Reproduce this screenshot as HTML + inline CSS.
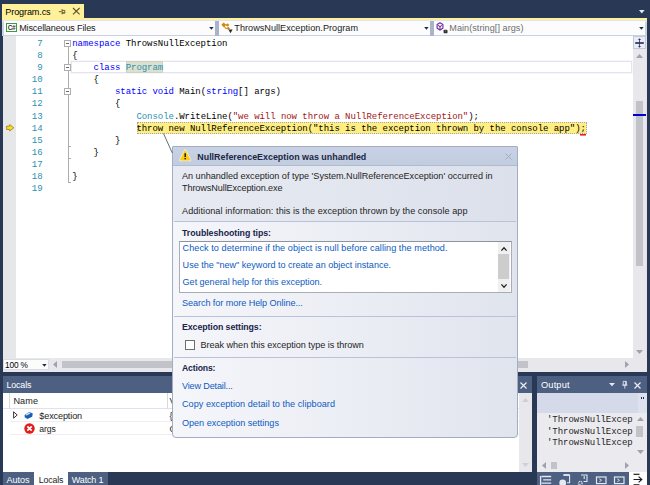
<!DOCTYPE html>
<html><head><meta charset="utf-8"><title>Program.cs</title>
<style>
*{box-sizing:border-box;margin:0;padding:0}
html,body{width:650px;height:485px;overflow:hidden;background:#293955}
.abs{position:absolute}
#root{position:relative;width:650px;height:485px;overflow:hidden;background:#293955;font-family:"Liberation Sans",sans-serif;font-size:9.1px;color:#1e1e1e}
.ui{font-family:"Liberation Sans",sans-serif;font-size:9.1px;white-space:nowrap;line-height:11px;height:11px}
.mono{font-family:"Liberation Mono",monospace;font-size:9px;white-space:pre;letter-spacing:-0.05px}
.b{font-weight:bold}
.ln{left:13px;width:29.5px;text-align:right;color:#2b91af;height:12.13px;line-height:12.13px}
.cl{left:72.2px;height:12.13px;line-height:12.13px;color:#000}
.k{color:#0000ff}.t{color:#2b91af}.s{color:#a31515}
.ref{background:#dde3d5;box-shadow:0 0 0 0.5px #cfd6c8}
.cur{background:#ffee62;outline:1px dotted #9a8f3a;outline-offset:-0.5px}
.obox{width:7px;height:7px;border:1px solid #adadad;background:#fff}
.lnk{color:#0e5bc0}
.sep{height:1px;background:#b9c2d6;left:174px;width:342px}
svg{position:absolute;overflow:visible}
</style></head><body><div id="root">

<!-- document tab strip -->
<div class="abs" style="left:2px;top:4px;width:82px;height:15px;background:#fff09a"></div>
<div class="abs ui " style="left:5.3px;top:6.50px;font-size:9.1px;letter-spacing:-0.130px;color:#000">Program.cs</div>
<svg style="left:58px;top:8px" width="24" height="9" viewBox="0 0 24 9">
  <path d="M0.9 3.7H3.6 M4.1 1.1V6.3 M4.1 2.4H6.8V5.1H4.1 M4.1 4.8H6.8" fill="none" stroke="#5e5333" stroke-width="0.9"/>
  <path d="M15 0L21.6 6.3M21.6 0L15 6.3" fill="none" stroke="#5e5333" stroke-width="1.15"/>
</svg>
<svg style="left:638.6px;top:10.3px" width="6" height="4" viewBox="0 0 6 4"><path d="M0 0H5.6L2.8 3.4Z" fill="#e4e9f2"/></svg>
<div class="abs" style="left:2px;top:17.8px;width:645px;height:2.2px;background:#fff09a"></div>

<!-- navigation bar -->
<div class="abs" style="left:2px;top:20px;width:645px;height:16px;background:linear-gradient(180deg,#e2e6f0 0,#dfe3ee 1.5px,#cdd4e4 3px,#c9d1e2 100%)"></div>
<div class="abs" style="left:3.5px;top:21.2px;width:211.5px;height:13.5px;background:#fcfcfd"></div>
<div class="abs" style="left:218.5px;top:21.2px;width:211.5px;height:13.5px;background:#fcfcfd"></div>
<div class="abs" style="left:433.5px;top:21.2px;width:211.8px;height:13.5px;background:#fcfcfd"></div>
<div class="abs" style="left:215px;top:21px;width:3.5px;height:14.5px;background:#a9b4cb"></div>
<div class="abs" style="left:430px;top:21px;width:3.5px;height:14.5px;background:#a9b4cb"></div>
<!-- C# icon -->
<div class="abs" style="left:6px;top:23px;width:11px;height:9px;border:1px solid #3f9a45;background:#fff"></div>
<div class="abs" style="left:7px;top:24px;width:9px;height:7px;line-height:7px;font-size:6.5px;font-weight:bold;color:#333;text-align:center;letter-spacing:-0.3px;font-family:'Liberation Sans',sans-serif">C#</div>
<div class="abs ui " style="left:19.2px;top:22.50px;font-size:9.08px;letter-spacing:-0.152px;color:#1b1b1b">Miscellaneous Files</div>
<svg style="left:209px;top:26.8px" width="5" height="3" viewBox="0 0 5 3"><path d="M0.2 0H4.6L2.4 2.7Z" fill="#1b2a47"/></svg>
<!-- class icon -->
<svg style="left:220.5px;top:21.5px" width="12" height="12" viewBox="0 0 12 12">
  <path d="M0.4 2.85L2.7 0.55L5 2.85L2.7 5.15Z M4.9 3L6.6 1.3L8.3 3L6.6 4.7Z M5.6 6.4L7.3 4.7L9 6.4L7.3 8.1Z" fill="#d2860f"/>
  <path d="M2.7 3L6.6 3 M3.2 4.2L4.6 6.3L7.3 6.4" fill="none" stroke="#d2860f" stroke-width="1.1"/>
  <path d="M7.4 7.6H11.6L9.5 11.2Z" fill="#2b2b2b"/>
</svg>
<div class="abs ui " style="left:234.3px;top:22.50px;font-size:9.1px;letter-spacing:0.033px;color:#1b1b1b">ThrowsNullException.Program</div>
<svg style="left:424px;top:26.8px" width="5" height="3" viewBox="0 0 5 3"><path d="M0.2 0H4.6L2.4 2.7Z" fill="#1b2a47"/></svg>
<!-- method icon -->
<svg style="left:435.5px;top:21.5px" width="12" height="12" viewBox="0 0 12 12">
  <path d="M4 0.8L6.9 2.5V6.3L4 8.1L1.1 6.3V2.5Z" fill="#fff" stroke="#6c2aa0" stroke-width="1.15" stroke-linejoin="round"/>
  <path d="M2.1 3.4L4 4.7L5.9 3.4 M4 4.7V7.8" fill="none" stroke="#6c2aa0" stroke-width="1.1"/>
  <rect x="7.6" y="7.7" width="3.9" height="3.6" rx="0.9" fill="#333"/><path d="M9 9.3L10.2 8.6" stroke="#999" stroke-width="0.6"/>
</svg>
<div class="abs ui " style="left:449.3px;top:22.50px;font-size:9.1px;letter-spacing:0.048px;color:#6d6d6d">Main(string[] args)</div>
<svg style="left:638.5px;top:26.8px" width="5" height="3" viewBox="0 0 5 3"><path d="M0.2 0H4.6L2.4 2.7Z" fill="#1b2a47"/></svg>

<!-- editor -->
<div class="abs" style="left:2.6px;top:36px;width:644.4px;height:335.6px;background:#fff"></div>
<div class="abs" style="left:2.8px;top:36px;width:13.1px;height:322px;background:#e6e7e8"></div>
<!-- current line box (line 9) -->
<div class="abs" style="left:71px;top:61.4px;width:560.5px;height:11.6px;border:1px solid #e4e4f0;box-shadow:0 0 0 0.5px #efeff6"></div>
<div class="abs" style="left:125.9px;top:60.8px;width:37.5px;height:12.3px;background:#dce1cf;border:1px solid #cdd3c0"></div>
<div class="abs" style="left:136.5px;top:122.3px;width:450px;height:12.2px;background:#ffee80;border:1px dotted #a3a3c6"></div>
<div class="abs" style="left:67.7px;top:47.31px;width:1px;height:135.00px;background:#adadad"></div>
<div class="abs obox" style="left:64.1px;top:39.61px"></div><div class="abs" style="left:65.9px;top:42.61px;width:3.4px;height:1px;background:#6a6a6a"></div>
<div class="abs obox" style="left:64.1px;top:63.88px"></div><div class="abs" style="left:65.9px;top:66.88px;width:3.4px;height:1px;background:#6a6a6a"></div>
<div class="abs obox" style="left:64.1px;top:88.14px"></div><div class="abs" style="left:65.9px;top:91.14px;width:3.4px;height:1px;background:#6a6a6a"></div>
<div class="abs" style="left:67.7px;top:145.92px;width:3px;height:1px;background:#adadad"></div>
<div class="abs" style="left:67.7px;top:158.05px;width:3px;height:1px;background:#adadad"></div>
<div class="abs" style="left:67.7px;top:182.31px;width:3px;height:1px;background:#adadad"></div>
<div class="abs mono ln" style="top:37.75px">7</div>
<div class="abs mono cl" style="top:37.75px"><span class="k">namespace</span> ThrowsNullException</div>
<div class="abs mono ln" style="top:49.88px">8</div>
<div class="abs mono cl" style="top:49.88px">{</div>
<div class="abs mono ln" style="top:62.01px">9</div>
<div class="abs mono cl" style="top:62.01px">    <span class="k">class</span> <span class="t">Program</span></div>
<div class="abs mono ln" style="top:74.14px">10</div>
<div class="abs mono cl" style="top:74.14px">    {</div>
<div class="abs mono ln" style="top:86.27px">11</div>
<div class="abs mono cl" style="top:86.27px">        <span class="k">static</span> <span class="k">void</span> Main(<span class="k">string</span>[] args)</div>
<div class="abs mono ln" style="top:98.40px">12</div>
<div class="abs mono cl" style="top:98.40px">        {</div>
<div class="abs mono ln" style="top:110.53px">13</div>
<div class="abs mono cl" style="top:110.53px">            <span class="t">Console</span>.WriteLine(<span class="s">"we will now throw a NullReferenceException"</span>);</div>
<div class="abs mono ln" style="top:122.66px">14</div>
<div class="abs mono cl" style="top:122.66px">            throw new NullReferenceException("this is the exception thrown by the console app");</div>
<div class="abs mono ln" style="top:134.79px">15</div>
<div class="abs mono cl" style="top:134.79px">        }</div>
<div class="abs mono ln" style="top:146.92px">16</div>
<div class="abs mono cl" style="top:146.92px">    }</div>
<div class="abs mono ln" style="top:159.05px">17</div>
<div class="abs mono ln" style="top:171.18px">18</div>
<div class="abs mono cl" style="top:171.18px">}</div>
<div class="abs mono ln" style="top:183.31px">19</div>
<!-- red squiggle -->
<svg style="left:580px;top:133.6px" width="6" height="2" viewBox="0 0 6 2"><rect x="0" y="0" width="6" height="1.6" fill="#e8202a"/></svg>
<!-- instruction pointer arrow -->
<svg style="left:5.6px;top:123.8px" width="9" height="8" viewBox="0 0 9 8"><path d="M0.6 2.1H3.7V0.6L7.8 3.8L3.7 7V5.5H0.6Z" fill="#ffd826" stroke="#9a7f22" stroke-width="0.8" stroke-linejoin="round"/></svg>

<!-- editor vertical scrollbar -->
<div class="abs" style="left:633.3px;top:36px;width:12.6px;height:322px;background:#e8e8ec"></div><div class="abs" style="left:645.9px;top:36px;width:1.1px;height:335px;background:#dfe3ee"></div>
<div class="abs" style="left:633.3px;top:36px;width:12.6px;height:12.8px;background:#e9ecf6;border:1px solid #c3c9dd"></div>
<svg style="left:635.1px;top:38.2px" width="9" height="10" viewBox="0 0 9 10"><path d="M0.2 5H8.8" stroke="#2a3654" stroke-width="1.7"/><path d="M4.5 0.2L6 2.1H4.9V7.9H6L4.5 9.8L3 7.9H4.1V2.1H3Z" fill="#2a3654"/></svg>
<svg style="left:636px;top:54px" width="7" height="4" viewBox="0 0 7 4"><path d="M3.5 0L7 4H0Z" fill="#a0a3ad"/></svg>
<div class="abs" style="left:635.7px;top:101px;width:7.3px;height:165px;background:#c2c3c9"></div>
<div class="abs" style="left:633.3px;top:114.3px;width:12.6px;height:1.4px;background:#0000cd"></div>
<svg style="left:636px;top:350px" width="7" height="4" viewBox="0 0 7 4"><path d="M0 0H7L3.5 4Z" fill="#a0a3ad"/></svg>

<!-- horizontal scrollbar row -->
<div class="abs" style="left:2.6px;top:358px;width:644.4px;height:13.6px;background:#e8e8ec"></div>
<div class="abs" style="left:3px;top:358.8px;width:45.5px;height:11.7px;background:#fcfcfd;border:1px solid #d9dce6"></div>
<div class="abs ui " style="left:5.0px;top:359.50px;font-size:8.31px;letter-spacing:-0.151px;color:#000">100 %</div>
<svg style="left:41.5px;top:363.8px" width="5" height="3" viewBox="0 0 5 3"><path d="M0.2 0H4.6L2.4 2.7Z" fill="#1b2a47"/></svg>
<svg style="left:53px;top:361px" width="4" height="7" viewBox="0 0 4 7"><path d="M4 0V7L0 3.5Z" fill="#a0a3ad"/></svg>
<div class="abs" style="left:61.5px;top:361px;width:466px;height:6.8px;background:#c2c3c9"></div>
<svg style="left:625px;top:361.4px" width="4" height="7" viewBox="0 0 4 7"><path d="M0 0V7L4 3.5Z" fill="#a0a3ad"/></svg>

<!-- Locals panel -->
<div class="abs" style="left:2.5px;top:376.4px;width:529.2px;height:16.6px;background:#4d6082"></div>
<div class="abs ui " style="left:6.5px;top:379.50px;font-size:8.89px;letter-spacing:-0.148px;color:#fff">Locals</div>
<svg style="left:519.5px;top:381.5px" width="7" height="7" viewBox="0 0 7 7"><path d="M0.5 0.5L6.5 6.5M6.5 0.5L0.5 6.5" stroke="#f0f3f8" stroke-width="1.1" fill="none"/></svg>
<div class="abs" style="left:2.5px;top:393px;width:529.5px;height:79px;background:#fff"></div>
<div class="abs" style="left:3px;top:393px;width:516px;height:16px;background:#fff;border-bottom:1px solid #dfe2ea"></div>
<div class="abs" style="left:8.8px;top:393px;width:1px;height:15.5px;background:#d6d9e0"></div>
<div class="abs" style="left:167px;top:393px;width:1px;height:15.5px;background:#d6d9e0"></div>
<div class="abs ui " style="left:13.4px;top:395.50px;font-size:9.1px;letter-spacing:0.134px;color:#1b1b1b">Name</div>
<div class="abs ui " style="left:169.5px;top:395.50px;font-size:9.1px;letter-spacing:0.000px;color:#1b1b1b">Value</div>
<div class="abs" style="left:10px;top:420.5px;width:509px;height:1px;background:#eeeef2"></div>
<div class="abs" style="left:10px;top:434px;width:509px;height:1px;background:#eeeef2"></div>
<!-- expander -->
<svg style="left:13px;top:411px" width="5" height="8" viewBox="0 0 5 8"><path d="M0.6 0.8L4.2 4L0.6 7.2Z" fill="#fff" stroke="#222" stroke-width="0.9"/></svg>
<!-- blue cube -->
<svg style="left:23.5px;top:410.5px" width="10" height="9" viewBox="0 0 10 9"><path d="M0.6 4L5.4 0.9L8.8 2.6L8.2 5.8L3.4 8L0.7 6.3Z" fill="#1b5fb4"/><path d="M1.4 3.9L5.3 1.5L6.6 2.2L2.7 4.6Z" fill="#e8f1fb"/></svg>
<div class="abs ui " style="left:39.3px;top:410.50px;font-size:9.1px;letter-spacing:-0.130px;color:#1b1b1b">$exception</div>
<div class="abs ui " style="left:169.5px;top:410.50px;font-size:9.1px;letter-spacing:0.000px;color:#1b1b1b">{</div>
<!-- red x -->
<svg style="left:24px;top:422.5px" width="11" height="11" viewBox="0 0 11 11"><circle cx="5.5" cy="5.5" r="5.2" fill="#e51b1b"/><path d="M3.3 3.3L7.7 7.7M7.7 3.3L3.3 7.7" stroke="#fff" stroke-width="1.7" fill="none"/></svg>
<div class="abs ui " style="left:39.3px;top:423.50px;font-size:8.69px;letter-spacing:-0.151px;color:#1b1b1b">args</div>
<div class="abs ui " style="left:169.5px;top:423.50px;font-size:9.1px;letter-spacing:0.000px;color:#1b1b1b">C</div>
<!-- locals scrollbar -->
<div class="abs" style="left:519px;top:393px;width:13px;height:79px;background:#e8e8ec"></div>
<svg style="left:522px;top:397.5px" width="7" height="4" viewBox="0 0 7 4"><path d="M3.5 0L7 4H0Z" fill="#cfd0d6"/></svg>
<svg style="left:522px;top:463px" width="7" height="4" viewBox="0 0 7 4"><path d="M0 0H7L3.5 4Z" fill="#cfd0d6"/></svg>
<!-- bottom tabs left -->
<div class="abs" style="left:3px;top:472px;width:31px;height:13px;background:#4d6082"></div>
<div class="abs" style="left:34px;top:472px;width:33.5px;height:13px;background:#fff"></div>
<div class="abs" style="left:68px;top:472px;width:40px;height:13px;background:#4d6082"></div>
<div class="abs ui " style="left:6.5px;top:474.50px;font-size:9.1px;letter-spacing:-0.053px;color:#fff">Autos</div>
<div class="abs ui " style="left:38.8px;top:474.50px;font-size:8.79px;letter-spacing:-0.150px;color:#1b1b1b">Locals</div>
<div class="abs ui " style="left:71.8px;top:474.50px;font-size:8.99px;letter-spacing:-0.147px;color:#fff">Watch 1</div>

<!-- Output panel -->
<div class="abs" style="left:537px;top:376.4px;width:109.8px;height:16.6px;background:#4d6082"></div>
<div class="abs ui " style="left:541.0px;top:379.50px;font-size:9.26px;letter-spacing:0.151px;color:#fff">Output</div>
<svg style="left:609.4px;top:383px" width="6" height="4" viewBox="0 0 6 4"><path d="M0 0H6L3 3.3Z" fill="#e6ebf4"/></svg>
<svg style="left:622.2px;top:381.3px" width="6" height="8" viewBox="0 0 6 8"><path d="M1.2 0.4H4.4V4H1.2Z M3.6 0.4V4 M0.2 4.2H5.4 M2.8 4.2V7.6" fill="none" stroke="#e6ebf4" stroke-width="0.85"/></svg>
<svg style="left:634px;top:381.5px" width="7" height="7" viewBox="0 0 7 7"><path d="M0.5 0.5L6.5 6.5M6.5 0.5L0.5 6.5" stroke="#f0f3f8" stroke-width="1.1" fill="none"/></svg>
<div class="abs" style="left:537px;top:393px;width:110px;height:20px;background:#d4dae9"></div>
<div class="abs" style="left:638px;top:393px;width:9px;height:20px;background:#dde2ee"></div>
<div class="abs" style="left:640.5px;top:396.5px;width:1.2px;height:2.4px;background:#1e2b4a"></div>
<div class="abs" style="left:642.7px;top:396.5px;width:1.2px;height:2.4px;background:#1e2b4a"></div>
<div class="abs" style="left:537px;top:413px;width:110px;height:59px;background:#ebebef"></div>
<div class="abs mono" style="left:547px;top:415px;width:85.5px;height:11px;overflow:hidden;line-height:11px;color:#1e1e1e">'ThrowsNullException</div>
<div class="abs mono" style="left:547px;top:427px;width:85.5px;height:11px;overflow:hidden;line-height:11px;color:#1e1e1e">'ThrowsNullException</div>
<div class="abs mono" style="left:547px;top:438px;width:85.5px;height:11px;overflow:hidden;line-height:11px;color:#1e1e1e">'ThrowsNullException</div>
<svg style="left:636.5px;top:417px" width="7" height="4" viewBox="0 0 7 4"><path d="M3.5 0L7 4H0Z" fill="#a0a3ad"/></svg>
<div class="abs" style="left:636px;top:425.5px;width:7px;height:11.5px;background:#c2c3c9"></div>
<svg style="left:636.5px;top:450px" width="7" height="4" viewBox="0 0 7 4"><path d="M0 0H7L3.5 4Z" fill="#a0a3ad"/></svg>
<svg style="left:542px;top:461.5px" width="4" height="7" viewBox="0 0 4 7"><path d="M4 0V7L0 3.5Z" fill="#a0a3ad"/></svg>
<div class="abs" style="left:550.5px;top:462px;width:6.5px;height:6.5px;background:#c2c3c9"></div>
<svg style="left:624.5px;top:461.5px" width="4" height="7" viewBox="0 0 4 7"><path d="M0 0V7L4 3.5Z" fill="#a0a3ad"/></svg>
<!-- output bottom tab strip -->
<div class="abs" style="left:537px;top:472px;width:92px;height:13px;background:#4d6082"></div>
<div class="abs" style="left:629px;top:472px;width:17.5px;height:13px;background:#fff"></div>
<svg style="left:537px;top:472px" width="110" height="13" viewBox="0 0 110 13">
  <g fill="none" stroke="#e3e8f1" stroke-width="1.3">
    <path d="M4.6 4.5H14.2 M6.2 7.9H14.2 M4.6 11.2H14.2 M3.6 4V13"/>
    <path d="M26.5 3.2H32.6V10.8H30" stroke-width="1.1"/><path d="M26.5 2.9H32.6" stroke-width="1.6"/>
    <path d="M44 3H50V9.5H46.5" stroke-width="1.1"/><path d="M47.2 4V7" stroke-width="1.1"/>
    <rect x="59.5" y="5" width="9.5" height="6.6" stroke-width="1.2"/><path d="M62.3 6.8L64.5 8.3L62.3 9.8" stroke-width="0.9"/>
    <rect x="77.5" y="5" width="9.5" height="6.6" stroke-width="1.2"/><path d="M80.3 6.8L82.5 8.3L80.3 9.8" stroke-width="0.9"/>
  </g>
  <circle cx="25.7" cy="11" r="3.4" fill="#e3e8f1"/>
  <circle cx="43.3" cy="11.2" r="1.8" fill="none" stroke="#e3e8f1" stroke-width="1.3" stroke-dasharray="1 0.6"/>
  <g fill="none" stroke="#1e1e1e" stroke-width="1.2">
    <path d="M96.5 2.3H102.5"/><path d="M96.5 7.5H104.6 M101.6 4.6L104.8 7.5L101.6 10.4"/><path d="M96.5 12.8H102.5"/>
  </g>
</svg>

<!-- Exception popup -->
<div class="abs" id="pop" style="left:172px;top:145.5px;width:346px;height:292.5px;border:1px solid #a2adc5;border-radius:1px 1px 4px 4px;background:linear-gradient(90deg,#f5f6fa 0%,#eceef5 50%,#e0e4ed 100%);overflow:hidden"><div class="abs" style="left:0;top:0;width:344px;height:19px;background:linear-gradient(180deg,#c8d2e4,#c1ccdf)"></div><div class="abs" style="left:0;top:19px;width:344px;height:56px;background:linear-gradient(90deg,#e7eaf2 0%,#e2e6ef 50%,#dce0eb 100%)"></div><div class="abs" style="left:0;top:18.6px;width:344px;height:1px;background:#b0bbd1"></div></div>
<svg style="left:162px;top:132px" width="12" height="23" viewBox="0 0 12 23"><path d="M1.5 1.5L10.3 21" stroke="#555b66" stroke-width="0.9" fill="none"/></svg>
<svg style="left:179px;top:149px" width="12" height="13" viewBox="0 0 12 13"><path d="M6.2 1.6L10.9 11H1.5Z" fill="#ffcb0b" stroke="#f3f1e4" stroke-width="2.4" stroke-linejoin="round"/><path d="M6.2 1.6L10.9 11H1.5Z" fill="#ffcb0b" stroke="#ffcb0b" stroke-width="1" stroke-linejoin="round"/><path d="M6.2 4.3V8.1" stroke="#111" stroke-width="1.4"/><rect x="5.5" y="8.9" width="1.4" height="1.4" fill="#111"/></svg>
<div class="abs ui  b" style="left:197.3px;top:151.50px;font-size:8.9px;letter-spacing:0.009px;color:#1a2644">NullReferenceException was unhandled</div>
<svg style="left:505px;top:152.5px" width="7" height="7" viewBox="0 0 7 7"><path d="M0.5 0.5L6.5 6.5M6.5 0.5L0.5 6.5" stroke="#a3adc0" stroke-width="1" fill="none"/></svg>
<div class="abs ui " style="left:182.0px;top:170.50px;font-size:9.1px;letter-spacing:-0.011px;color:#1e1e1e">An unhandled exception of type &#x27;System.NullReferenceException&#x27; occurred in</div>
<div class="abs ui " style="left:182.0px;top:182.50px;font-size:9.1px;letter-spacing:-0.092px;color:#1e1e1e">ThrowsNullException.exe</div>
<div class="abs ui " style="left:182.0px;top:205.50px;font-size:9.1px;letter-spacing:0.064px;color:#1e1e1e">Additional information: this is the exception thrown by the console app</div>
<div class="abs sep" style="top:220.7px"></div>
<div class="abs ui  b" style="left:182.0px;top:227.50px;font-size:8.8px;letter-spacing:-0.044px;color:#18244a">Troubleshooting tips:</div>
<div class="abs" style="left:179px;top:241.2px;width:332.5px;height:52.3px;background:#fff;border:1px solid #a9adb6;border-top-color:#8f939c"></div>
<div class="abs ui lnk" style="left:182.6px;top:242.50px;font-size:9.1px;letter-spacing:0.062px;">Check to determine if the object is null before calling the method.</div>
<div class="abs ui lnk" style="left:182.6px;top:259.50px;font-size:9.1px;letter-spacing:-0.025px;">Use the &quot;new&quot; keyword to create an object instance.</div>
<div class="abs ui lnk" style="left:182.6px;top:276.50px;font-size:9.1px;letter-spacing:-0.046px;">Get general help for this exception.</div>
<div class="abs" style="left:497.8px;top:242.2px;width:12.7px;height:50.3px;background:#f0f0f0"></div>
<div class="abs" style="left:498.2px;top:254.2px;width:10.8px;height:24.4px;background:#cdcdcd"></div>
<svg style="left:501px;top:246.5px" width="6" height="4" viewBox="0 0 6 4"><path d="M0.4 3.6L3 0.8L5.6 3.6" stroke="#222" stroke-width="1.3" fill="none"/></svg>
<svg style="left:501px;top:284px" width="6" height="4" viewBox="0 0 6 4"><path d="M0.4 0.4L3 3.2L5.6 0.4" stroke="#222" stroke-width="1.3" fill="none"/></svg>
<div class="abs ui lnk" style="left:182.0px;top:297.50px;font-size:9.1px;letter-spacing:-0.068px;">Search for more Help Online...</div>
<div class="abs sep" style="top:315.8px"></div>
<div class="abs ui  b" style="left:182.0px;top:321.50px;font-size:8.8px;letter-spacing:-0.086px;color:#18244a">Exception settings:</div>
<div class="abs" style="left:185.1px;top:340.2px;width:10.4px;height:9.8px;background:#fdfdfd;border:1px solid #6f6f6f"></div>
<div class="abs ui " style="left:200.5px;top:339.50px;font-size:9.1px;letter-spacing:-0.037px;color:#1e1e1e">Break when this exception type is thrown</div>
<div class="abs sep" style="top:357px"></div>
<div class="abs ui  b" style="left:182.0px;top:362.50px;font-size:8.65px;letter-spacing:-0.150px;color:#18244a">Actions:</div>
<div class="abs ui lnk" style="left:182.0px;top:380.50px;font-size:9.08px;letter-spacing:-0.149px;">View Detail...</div>
<div class="abs ui lnk" style="left:182.0px;top:398.50px;font-size:9.1px;letter-spacing:0.035px;">Copy exception detail to the clipboard</div>
<div class="abs ui lnk" style="left:182.0px;top:417.50px;font-size:9.1px;letter-spacing:-0.029px;">Open exception settings</div>
</div></body></html>
